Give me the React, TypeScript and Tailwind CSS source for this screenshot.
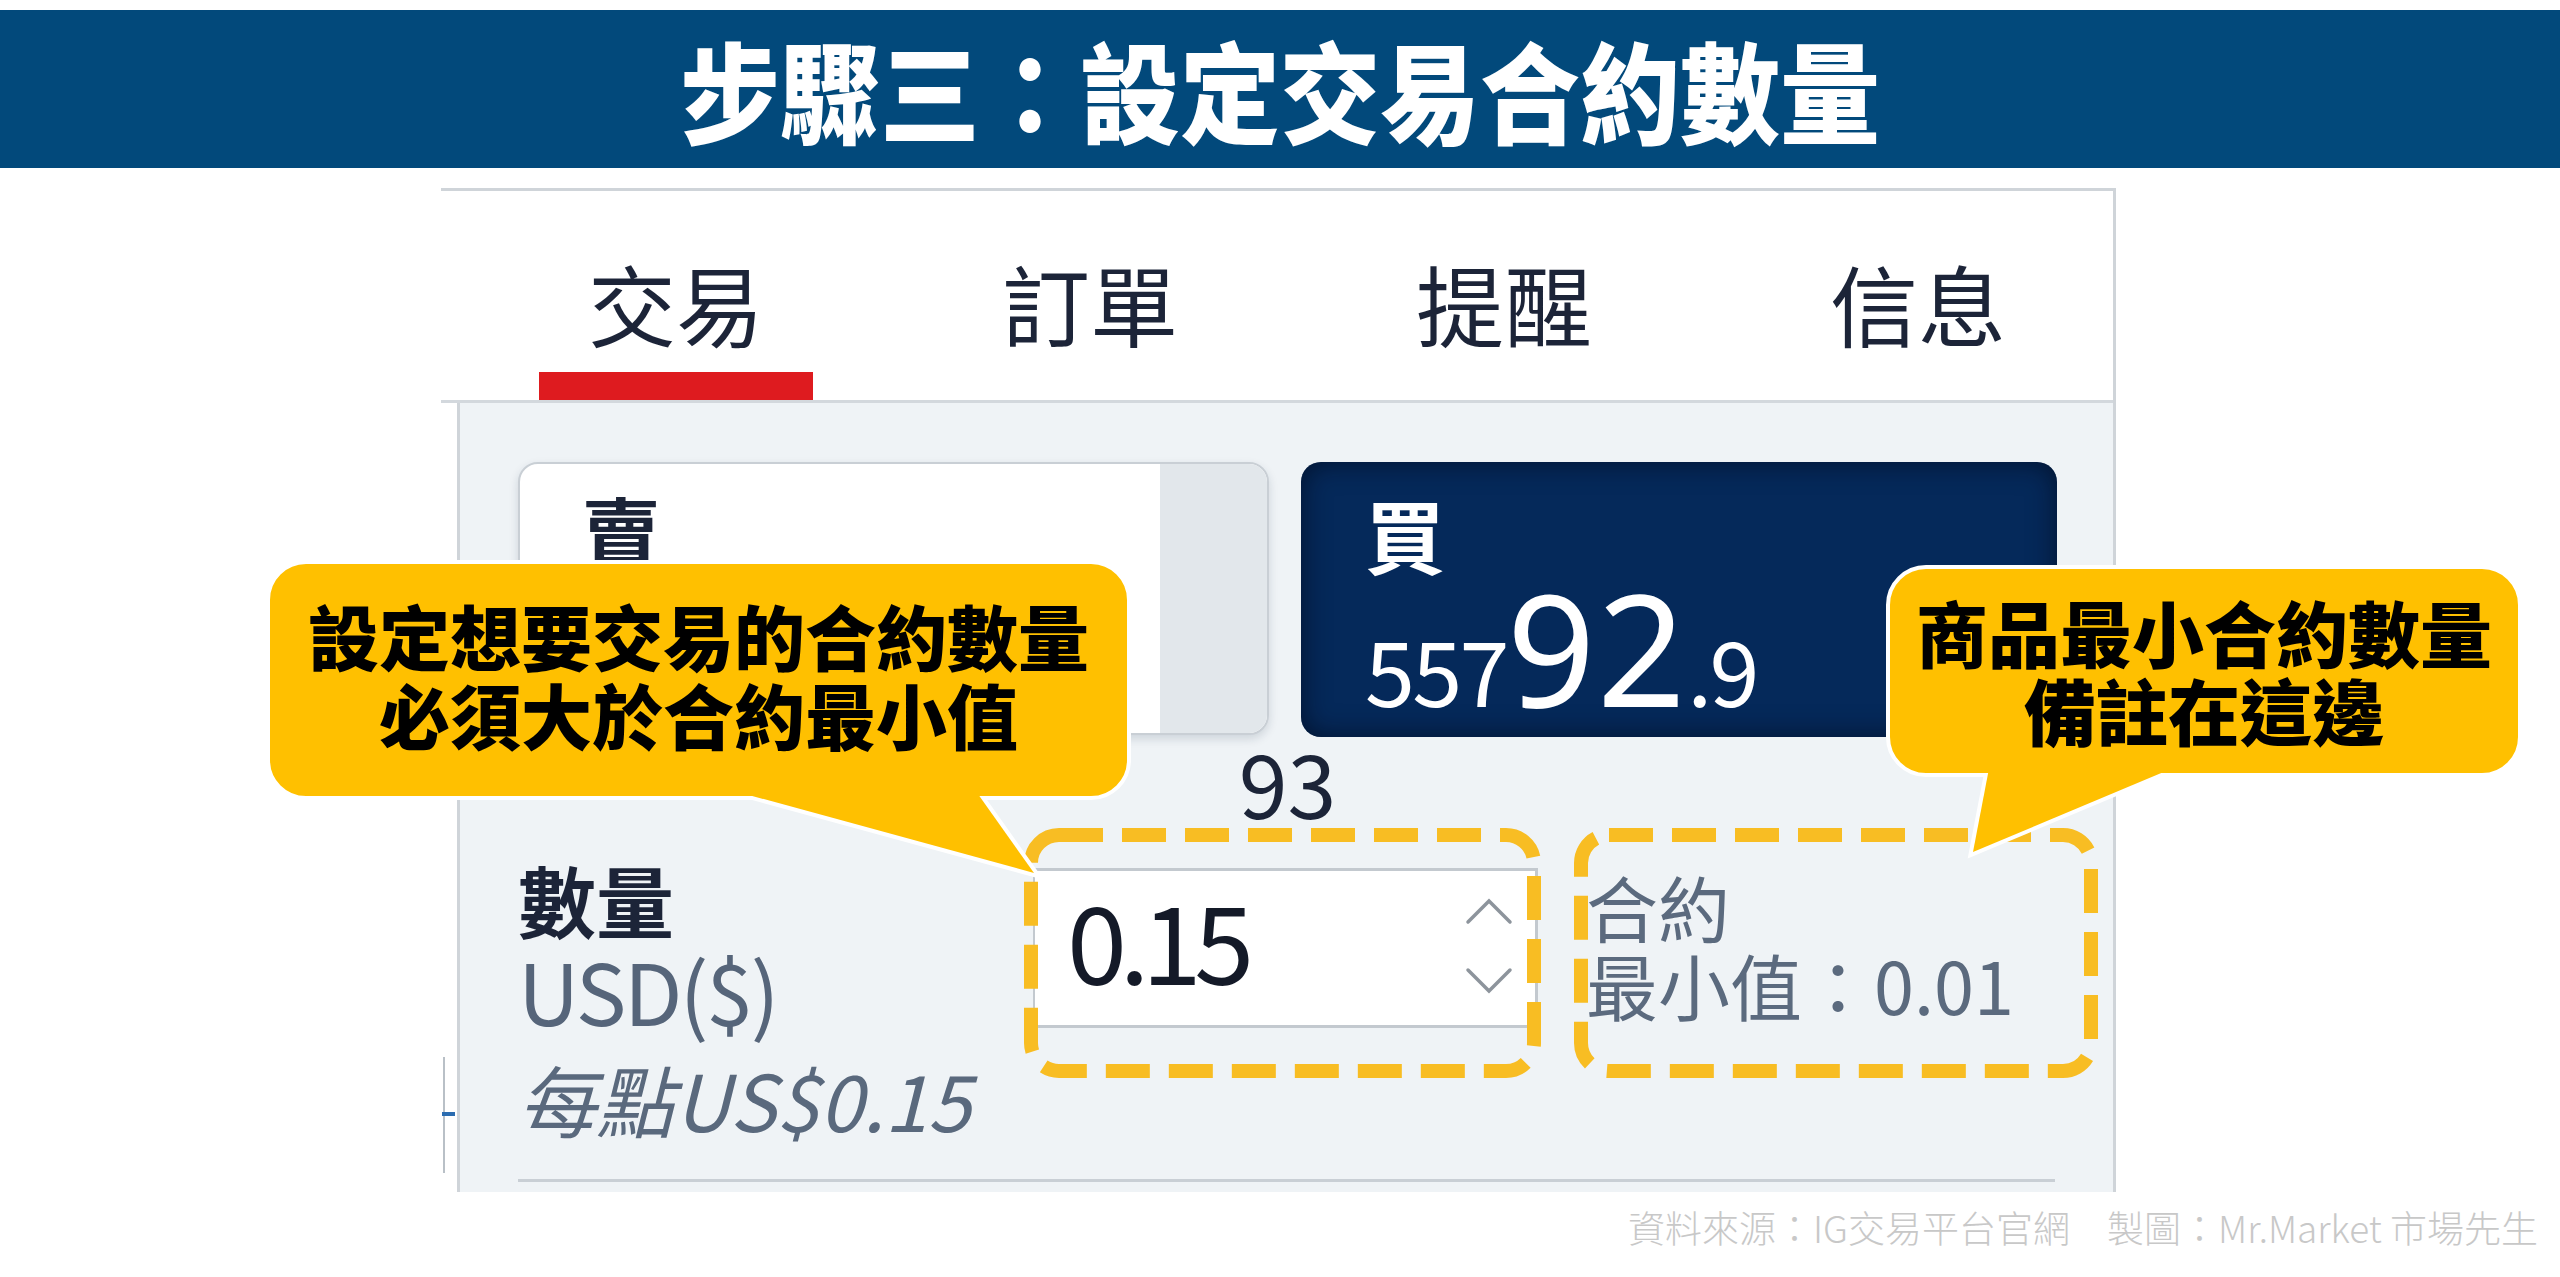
import type { ReactNode } from "react";

const tabs = ["交易", "訂單", "提醒", "信息"];

function Chevron({ down }: { down?: boolean }) {
  return (
    <svg width="48" height="27" viewBox="0 0 48 27" fill="none" stroke="#8d949c" strokeWidth="3.5" strokeLinecap="round">
      <polyline points={down ? "3,3 24,24 45,3" : "3,24 24,3 45,24"} />
    </svg>
  );
}

function Header() {
  return (
    <header className="mt-[10px] flex h-[158px] items-center justify-center bg-[#02497b]">
      <h1 className="scale-y-110 text-[100px] font-black leading-none text-white">步驟三：設定交易合約數量</h1>
    </header>
  );
}

function Tabs() {
  return (
    <nav className="flex h-[212px] border-b-[3px] border-[#d3d8dd] bg-white pl-[28px]">
      {tabs.map((t, i) => (
        <div key={t} className="flex w-[414px] shrink-0 flex-col items-center pt-[67px]">
          <span className="text-[88px] leading-none text-[#1c2438]">{t}</span>
          {i === 0 && <span className="mt-[26px] h-[28px] w-[274px] bg-[#de1b1f]" />}
        </div>
      ))}
    </nav>
  );
}

function PriceCards() {
  return (
    <>
      <div className="flex w-[1539px] gap-[32px]">
        {/* sell */}
        <div className="flex h-[273px] w-[751px] overflow-hidden rounded-[20px] border-2 border-[#c9cfd5] bg-white shadow-[0_4px_10px_rgba(20,40,70,0.15)]">
          <div className="flex-1 pl-[61px] pt-[26px]">
            <span className="text-[80px] font-bold leading-none text-[#1c2438]">賣</span>
          </div>
          <div className="w-[107px] bg-[#e2e7eb]" />
        </div>
        {/* buy */}
        <div className="h-[275px] w-[756px] rounded-[20px] bg-[#05295a] pl-[64px] pt-[31px] text-white shadow-[inset_0_0_28px_rgba(0,8,25,0.7)]">
          <div className="text-[80px] font-bold leading-none">買</div>
          <div className="mt-[14px] text-[90px] leading-[120px] tracking-[-0.03em]">
            557
            <span className="font-['Noto_Sans',sans-serif] text-[155px] tracking-[0.01em]">92</span>
            .9
          </div>
        </div>
      </div>
      <div className="w-[1539px] text-center text-[88px] leading-none text-[#1c2438]">93</div>
    </>
  );
}

function QuantityRow() {
  return (
    <div className="mt-[35px] flex items-start">
      <div className="w-[515px] shrink-0">
        <div className="text-[78px] font-bold leading-none text-[#1c2438]">數量</div>
        <div className="mt-[6px] text-[85px] leading-[90px] tracking-[-0.03em] text-[#56657a]">USD($)</div>
        <div className="mt-[19px] text-[78px] italic leading-[90px] text-[#5a697d]">每點US$0.15</div>
      </div>
      <div className="mt-[8px] flex h-[160px] w-[505px] shrink-0 justify-between border-[3px] border-l-2 border-[#c3c9cf] bg-white pl-[32px] pr-[22px]">
        <span className="pt-[13px] text-[108px] leading-none tracking-[-0.07em] text-[#141a28]">0.15</span>
        <div className="flex flex-col gap-[42px] pt-[27px]">
          <Chevron />
          <Chevron down />
        </div>
      </div>
      <div className="ml-[48px] pt-[10px] text-[72px] leading-none text-[#5b6a7e]">
        <div>合約</div>
        <div className="mt-[6px]">最小值：0.01</div>
      </div>
    </div>
  );
}

function TradePanel() {
  return (
    <section className="ml-[441px] mt-[20px] h-[1004px] w-[1675px] overflow-hidden border-r-[3px] border-t-[3px] border-[#cfd4d9]">
      <Tabs />
      <div className="flex h-[789px]">
        {/* left rail */}
        <div className="flex w-[16px] shrink-0 flex-col items-start bg-white pl-[1px] pt-[654px]">
          <div className="ml-[1px] h-[55px] w-[2px] bg-[#b9c0c7]" />
          <div className="h-[4px] w-[13px] bg-[#2b6cb0]" />
          <div className="ml-[1px] h-[57px] w-[2px] bg-[#b9c0c7]" />
        </div>
        <div className="flex-1 border-l-[3px] border-[#cfd4d9] bg-[#eff3f6] pl-[58px] pt-[59px]">
          <PriceCards />
          <QuantityRow />
          <div className="mt-[36px] h-[3px] w-[1537px] bg-[#c9cfd5]" />
        </div>
      </div>
    </section>
  );
}

const tail1 = "694,780 1034,873 968,780";
const tail2 = "1991,758 1973,852 2197,758";

function Callout({ className, children }: { className: string; children: ReactNode }) {
  return (
    <div className={`absolute rounded-[40px] border-4 border-white bg-[#ffc000] text-center font-black text-black ${className}`}>
      {children}
    </div>
  );
}

function Annotations() {
  return (
    <>
      <svg className="pointer-events-none absolute left-0 top-0" width="2560" height="1277" viewBox="0 0 2560 1277">
        <g fill="none" stroke="#f8bd23" strokeWidth="14" strokeDasharray="44 19">
          <rect x="1031" y="835" width="503" height="236" rx="28" />
          <rect x="1581" y="835" width="510" height="236" rx="28" />
        </g>
        <g fill="#ffc000" stroke="#ffffff" strokeWidth="8" strokeMiterlimit="12">
          <polygon points={tail1} />
          <polygon points={tail2} />
        </g>
      </svg>

      <Callout className="left-[266px] top-[560px] h-[240px] w-[865px] pt-[31px] text-[71px] leading-[79px]">
        <div>設定想要交易的合約數量</div>
        <div>必須大於合約最小值</div>
      </Callout>
      <Callout className="left-[1886px] top-[565px] h-[212px] w-[636px] rounded-[36px] pt-[23px] text-[72px] leading-[78px]">
        <div>商品最小合約數量</div>
        <div>備註在這邊</div>
      </Callout>

      {/* fill over the bubble border where the tails join */}
      <svg className="pointer-events-none absolute left-0 top-0" width="2560" height="1277" viewBox="0 0 2560 1277">
        <g fill="#ffc000">
          <polygon points={tail1} />
          <polygon points={tail2} />
        </g>
      </svg>
    </>
  );
}

export default function App() {
  return (
    <div className="relative h-[1277px] w-[2560px] overflow-hidden bg-white font-['Noto_Sans_CJK_TC','Noto_Sans',sans-serif]">
      <Header />
      <TradePanel />
      <p className="mt-[17px] pr-[22px] text-right text-[37px] font-light leading-none text-[#c8c8c8]">
        資料來源：IG交易平台官網　製圖：Mr.Market 市場先生
      </p>
      <Annotations />
    </div>
  );
}
